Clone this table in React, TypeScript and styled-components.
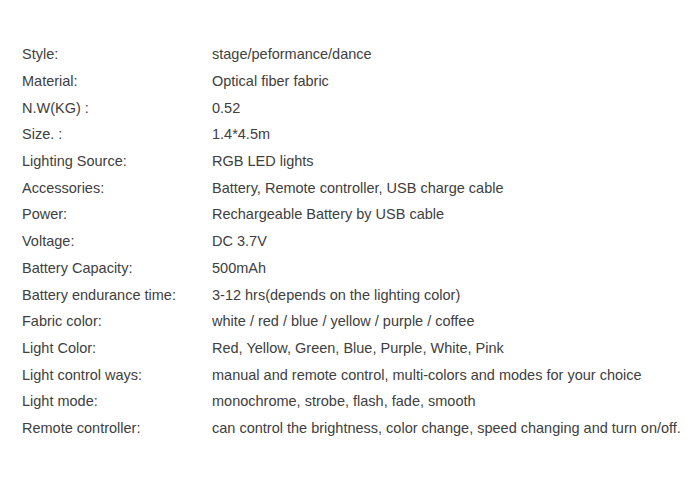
import styled, { createGlobalStyle } from "styled-components";

const GlobalStyle = createGlobalStyle`
  html, body {
    margin: 0;
    padding: 0;
    background: #fff;
  }
`;

const specs: [string, string][] = [
  ["Style:", "stage/peformance/dance"],
  ["Material:", "Optical fiber fabric"],
  ["N.W(KG) :", "0.52"],
  ["Size. :", "1.4*4.5m"],
  ["Lighting Source:", "RGB LED lights"],
  ["Accessories:", "Battery, Remote controller, USB charge cable"],
  ["Power:", "Rechargeable Battery by USB cable"],
  ["Voltage:", "DC 3.7V"],
  ["Battery Capacity:", "500mAh"],
  ["Battery endurance time:", "3-12 hrs(depends on the lighting color)"],
  ["Fabric color:", "white / red / blue / yellow / purple / coffee"],
  ["Light Color:", "Red, Yellow, Green, Blue, Purple, White, Pink"],
  ["Light control ways:", "manual and remote control, multi-colors and modes for your choice"],
  ["Light mode:", "monochrome, strobe, flash, fade, smooth"],
  ["Remote controller:", "can control the brightness, color change, speed changing and turn on/off."],
];

const App = () => {
  return (
    <>
      <GlobalStyle />
      <Page>
        <SpecTable>
          {specs.map(([label, value]) => (
            <Row key={label}>
              <Label>{label}</Label>
              <Value>{value}</Value>
            </Row>
          ))}
        </SpecTable>
      </Page>
    </>
  );
};

export default App;

const Page = styled.div`
  width: 700px;
  height: 494px;
  background: #fff;
  padding: 41px 0 0 22px;
  box-sizing: border-box;
  font-family: "Liberation Sans", Arial, sans-serif;
  font-size: 14.5px;
  color: #404040;
`;

const SpecTable = styled.div`
  display: flex;
  flex-direction: column;
`;

const Row = styled.div`
  display: grid;
  grid-template-columns: 190px 1fr;
  height: 26.7px;
  align-items: center;
  white-space: nowrap;
`;

const Label = styled.div``;

const Value = styled.div``;
